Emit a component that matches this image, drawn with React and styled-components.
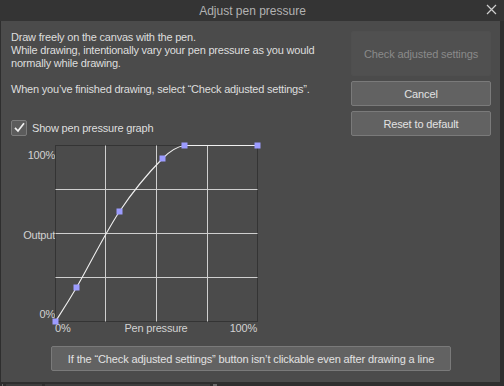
import React from "react";
import styled, { createGlobalStyle } from "styled-components";

const GlobalStyle = createGlobalStyle`
  html, body { margin: 0; padding: 0; background: #2e2e2e; }
  body {
    font-family: "Liberation Sans", Arial, sans-serif;
    font-size: 11px;
    letter-spacing: -0.2px;
    -webkit-font-smoothing: antialiased;
  }
`;

const Screen = styled.div`
  width: 504px;
  height: 386px;
  display: flex;
  flex-direction: column;
  background: #2e2e2e;
  overflow: hidden;
`;

const TitleBar = styled.div`
  height: 21px;
  flex: none;
  display: grid;
  grid-template-columns: 1fr auto 1fr;
  align-items: center;
  background: #343434;
  color: #b2b2b2;
  font-size: 12px;
  letter-spacing: 0;
`;

const Title = styled.div`
  grid-column: 2;
  padding-left: 1px;
`;

const CloseButton = styled.div`
  grid-column: 3;
  justify-self: end;
  width: 11px;
  height: 11px;
  margin-right: 7px;
  margin-top: -2px;
  display: flex;
`;

const Dialog = styled.div`
  width: 499px;
  height: 361px;
  margin-left: 1px;
  flex: none;
  box-sizing: border-box;
  background: #4b4b4b;
  padding: 10px 9px 11px 10px;
  display: flex;
  flex-direction: column;
  color: #dedede;
`;

const Top = styled.div`
  display: flex;
  justify-content: space-between;
  height: 105px;
`;

const TextColumn = styled.div`
  display: flex;
  flex-direction: column;
`;

const Paragraph = styled.p`
  margin: 0 0 13px 0;
  line-height: 13px;
  white-space: pre-line;
`;

const CheckRow = styled.label`
  margin-top: auto;
  display: flex;
  align-items: center;
  gap: 5px;
  height: 17px;
`;

const CheckBox = styled.span`
  width: 14px;
  height: 14px;
  border: 1px solid #7c7c7c;
  border-radius: 2px;
  background: #5c5c5c;
  display: flex;
  align-items: center;
  justify-content: center;
`;

const ButtonColumn = styled.div`
  width: 140px;
  display: flex;
  flex-direction: column;
  gap: 5px;
`;

const Button = styled.div`
  box-sizing: border-box;
  height: ${(p) => p.$h || 25}px;
  width: ${(p) => (p.$w ? p.$w + "px" : "100%")};
  display: flex;
  align-items: center;
  justify-content: center;
  border-radius: 2px;
  border: 1px solid ${(p) => (p.$disabled ? "#4f4f4f" : "#7a7a7a")};
  background: ${(p) => (p.$disabled ? "#505050" : "#626262")};
  color: ${(p) => (p.$disabled ? "#8a8a8a" : "#e2e2e2")};
  font-size: 11px;
  letter-spacing: -0.12px;
  white-space: nowrap;
`;

const GraphArea = styled.div`
  margin-top: 9px;
  display: grid;
  grid-template-columns: 44px 202px;
  grid-template-rows: 176px 14px;
  color: #d2d2d2;
`;

const YLabels = styled.div`
  display: flex;
  flex-direction: column;
  justify-content: space-between;
  align-items: flex-end;
  padding-top: 4px;
  line-height: 13px;
`;

const Plot = styled.div`
  position: relative;
`;

const XLabels = styled.div`
  grid-column: 2;
  display: grid;
  grid-template-columns: 1fr auto 1fr;
  line-height: 14px;
  & > :first-child { justify-self: start; }
  & > :last-child { justify-self: end; }
`;

const Footer = styled.div`
  margin-top: auto;
  display: flex;
  justify-content: center;
`;

const BottomStrip = styled.div`
  flex: 1;
  display: flex;
  align-items: flex-end;
  gap: 3px;
  padding-left: 2px;
`;

const StripCell = styled.div`
  width: ${(p) => p.$w}px;
  height: 2px;
  background: ${(p) => p.$c || "#3d3d3d"};
`;

const pts = [
  [0, 176],
  [21, 142],
  [64, 66],
  [107, 13],
  [129, 0],
  [202, 0],
];

const curve =
  "M0 176 C3.5 170.3 10.3 160.3 21 142 C31.7 123.7 49.7 87.5 64 66 C78.3 44.5 96.2 24 107 13 C116 4 122 1 129 0 L202 0";

function Chart() {
  return (
    <svg width="203" height="177" viewBox="-0.5 -0.5 203 177" style={{ overflow: "visible", display: "block" }}>
      <rect x="0" y="0" width="202" height="176" fill="none" stroke="#343434" strokeWidth="1" />
      {[50, 101, 152].map((x) => (
        <line key={"v" + x} x1={x} y1="0" x2={x} y2="176" stroke="#cfcfcf" strokeWidth="1" />
      ))}
      {[44, 88, 132].map((y) => (
        <line key={"h" + y} x1="0" y1={y} x2="202" y2={y} stroke="#cfcfcf" strokeWidth="1" />
      ))}
      <path d={curve} fill="none" stroke="#f0f0f0" strokeWidth="1.1" />
      {pts.map(([x, y], i) => (
        <rect key={i} x={x - 3} y={y - 3} width="6" height="6" fill="#9c9cff" />
      ))}
    </svg>
  );
}

export default function App() {
  return (
    <>
      <GlobalStyle />
      <Screen>
        <TitleBar>
          <Title>Adjust pen pressure</Title>
          <CloseButton>
            <svg width="11" height="11" viewBox="0 0 11 11">
              <path d="M1 1L10 10M10 1L1 10" stroke="#cfcfcf" strokeWidth="1.2" />
            </svg>
          </CloseButton>
        </TitleBar>
        <Dialog>
          <Top>
            <TextColumn>
              <Paragraph>
                {"Draw freely on the canvas with the pen.\nWhile drawing, intentionally vary your pen pressure as you would\nnormally while drawing."}
              </Paragraph>
              <Paragraph>When you’ve finished drawing, select “Check adjusted settings”.</Paragraph>
              <CheckRow>
                <CheckBox>
                  <svg width="13" height="13" viewBox="0 0 13 13">
                    <path d="M2 6.8L5 10L11 2.2" fill="none" stroke="#f2f2f2" strokeWidth="1.7" />
                  </svg>
                </CheckBox>
                Show pen pressure graph
              </CheckRow>
            </TextColumn>
            <ButtonColumn>
              <Button $disabled $h={45}>Check adjusted settings</Button>
              <Button>Cancel</Button>
              <Button>Reset to default</Button>
            </ButtonColumn>
          </Top>
          <GraphArea>
            <YLabels>
              <span>100%</span>
              <span>Output</span>
              <span>0%</span>
            </YLabels>
            <Plot>
              <Chart />
            </Plot>
            <XLabels>
              <span>0%</span>
              <span>Pen pressure</span>
              <span>100%</span>
            </XLabels>
          </GraphArea>
          <Footer>
            <Button $w={400}>If the “Check adjusted settings” button isn’t clickable even after drawing a line</Button>
          </Footer>
        </Dialog>
        <BottomStrip>
          <StripCell $w={1} $c="#6a6a6a" />
          <StripCell $w={36} />
          <StripCell $w={165} />
          <StripCell $w={4} $c="#6a6a6a" />
        </BottomStrip>
      </Screen>
    </>
  );
}
